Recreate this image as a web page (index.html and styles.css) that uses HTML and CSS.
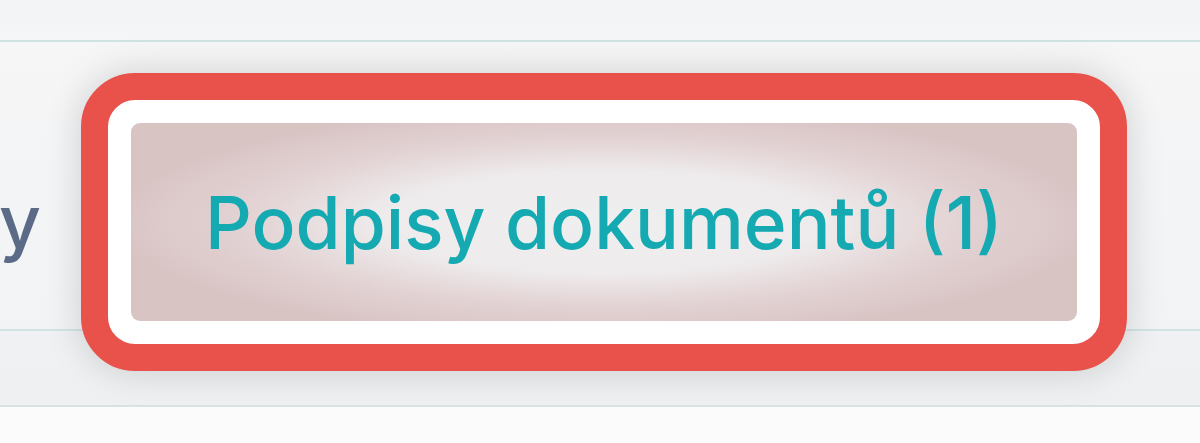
FILE: index.html
```html
<!DOCTYPE html>
<html lang="cs">
<head>
<meta charset="utf-8">
<link rel="stylesheet" href="styles.css">
</head>
<body>
<div class="page">
  <div class="top"></div>
  <div class="row">
    <span class="label">y</span>
    <div class="mark">
      <div class="tab">Podpisy dokumentů (1)</div>
    </div>
  </div>
  <div class="gap"></div>
  <div class="rest"></div>
</div>
</body>
</html>
```
FILE: styles.css
```css
html, body {
  margin: 0;
  padding: 0;
  background: #fafafa;
}
.page {
  width: 1200px;
  height: 443px;
  overflow: hidden;
  font-family: "Inter", "Noto Sans", sans-serif;
}
.top {
  height: 40px;
  background: linear-gradient(#f2f3f4, #f5f6f7);
  border-bottom: 2px solid #cfe3e1;
}
.row {
  height: 256px;
  padding-top: 31px;
  display: flex;
  align-items: flex-start;
  background: linear-gradient(#f6f6f7, #f1f3f4);
  border-bottom: 2px solid #d2e3e3;
}
.label {
  width: 82px;
  margin-left: -1px;
  margin-top: 50px;
  font-size: 73px;
  font-weight: 500;
  line-height: 198px;
  color: #5b6a86;
}
.mark {
  position: relative;
  padding: 23px;
  background: #ffffff;
  border: 27px solid #e8524a;
  border-radius: 54px;
  box-shadow: 0 0 34px 4px rgba(0, 0, 0, 0.13);
}
.tab {
  width: 946px;
  height: 198px;
  border-radius: 9px;
  display: flex;
  align-items: center;
  justify-content: center;
  font-size: 73px;
  font-weight: 500;
  color: #15a9b2;
  background: radial-gradient(ellipse 52% 58% at 50% 50%, #efeff0 0%, #eeebec 45%, #e3d3d4 72%, #d9c4c4 100%);
}
.gap {
  height: 74px;
  background: linear-gradient(#eff1f2, #eef0f1);
  border-bottom: 2px solid #d9e2e3;
}
.rest {
  height: 40px;
  background: #fbfbfb;
}
```
